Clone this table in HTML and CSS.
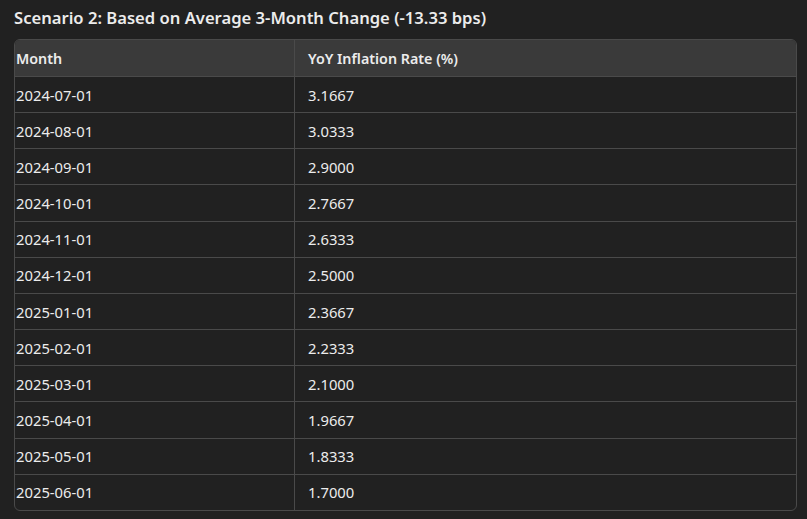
FILE: index.html
```html
<!DOCTYPE html>
<html>
<head>
<meta charset="utf-8">
<link rel="stylesheet" href="styles.css">
</head>
<body>
<h3 class="title">Scenario 2: Based on Average 3-Month Change (-13.33 bps)</h3>
<div class="wrap">
<table class="tbl">
<thead><tr><th>Month</th><th>YoY Inflation Rate (%)</th></tr></thead>
<tbody>
<tr><td>2024-07-01</td><td>3.1667</td></tr>
<tr><td>2024-08-01</td><td>3.0333</td></tr>
<tr><td>2024-09-01</td><td>2.9000</td></tr>
<tr><td>2024-10-01</td><td>2.7667</td></tr>
<tr><td>2024-11-01</td><td>2.6333</td></tr>
<tr><td>2024-12-01</td><td>2.5000</td></tr>
<tr><td>2025-01-01</td><td>2.3667</td></tr>
<tr><td>2025-02-01</td><td>2.2333</td></tr>
<tr><td>2025-03-01</td><td>2.1000</td></tr>
<tr><td>2025-04-01</td><td>1.9667</td></tr>
<tr><td>2025-05-01</td><td>1.8333</td></tr>
<tr><td>2025-06-01</td><td>1.7000</td></tr>
</tbody>
</table>
</div>
</body>
</html>
```
FILE: styles.css
```css
html, body {
  margin: 0;
  background: #212121;
  color: #ececec;
  font-family: "Noto Sans", "Open Sans", sans-serif;
}
body {
  padding: 6px 10px 0 14px;
}
.title {
  margin: 0 0 9px 0;
  font-size: 16.6px;
  font-weight: 600;
  line-height: 24px;
  color: #ececec;
}
.wrap {
  border: 1px solid #4a4a4a;
  border-radius: 6px;
  overflow: hidden;
}
.tbl {
  width: 100%;
  border-collapse: collapse;
  font-size: 14.8px;
}
.tbl th, .tbl td {
  text-align: left;
  height: 35.17px;
  padding: 0 13px;
  border-bottom: 1px solid #4a4a4a;
  border-left: 1px solid #4a4a4a;
}
.tbl th {
  background: #3a3a3a;
  font-size: 14.3px;
  font-weight: 600;
  height: 36px;
}
.tbl th:first-child, .tbl td:first-child {
  border-left: none;
  padding-left: 1px;
  width: 265px;
}
.tbl tbody tr:last-child td {
  border-bottom: none;
}
```
